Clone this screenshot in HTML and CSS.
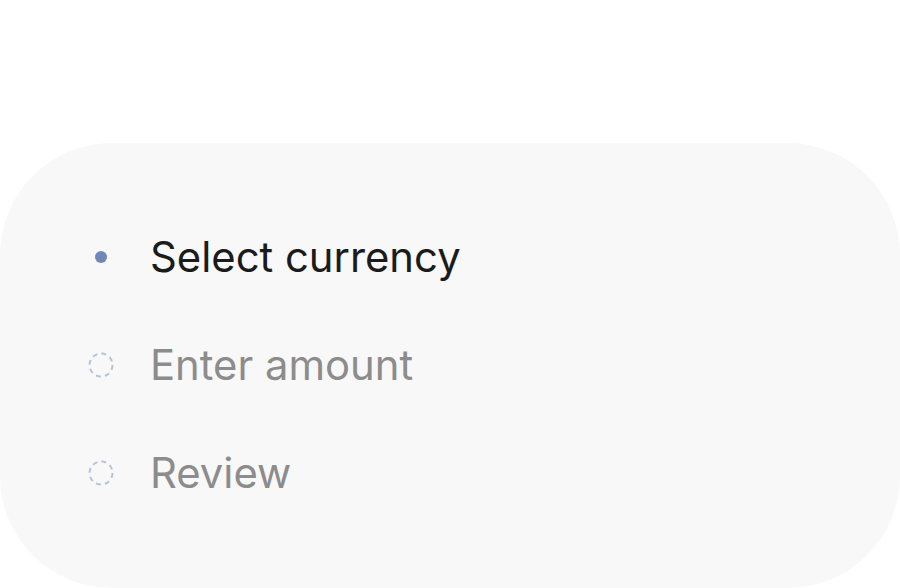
FILE: index.html
```html
<!DOCTYPE html>
<html lang="en">

<head>
    <meta charset="UTF-8">
    <title>Steps</title>
    <link rel="stylesheet" href="styles.css">
</head>

<body>
    <div class="card">
        <ol class="steps">
            <li class="step on">
                <span class="mark"><span class="dot"></span></span>
                <span class="label">Select currency</span>
            </li>
            <li class="step">
                <span class="mark">
                    <svg width="26" height="26" viewBox="0 0 26 26">
                        <circle cx="13" cy="13" r="11.5" fill="none" stroke="#b6c2d8" stroke-width="2" stroke-dasharray="5 4.03"/>
                    </svg>
                </span>
                <span class="label">Enter amount</span>
            </li>
            <li class="step">
                <span class="mark">
                    <svg width="26" height="26" viewBox="0 0 26 26">
                        <circle cx="13" cy="13" r="11.5" fill="none" stroke="#b6c2d8" stroke-width="2" stroke-dasharray="5 4.03"/>
                    </svg>
                </span>
                <span class="label">Review</span>
            </li>
        </ol>
    </div>
</body>

</html>
```

FILE: styles.css
```css
* {
    box-sizing: border-box;
}

body {
    margin: 0;
    background: #ffffff;
    font-family: Inter, "Noto Sans", sans-serif;
}

.card {
    margin-top: 143px;
    width: 900px;
    height: 445px;
    background: #f8f8f8;
    border-radius: 112px;
    padding: 60px 0 0 77px;
}

.steps {
    margin: 0;
    padding: 0;
    list-style: none;
}

.step {
    display: flex;
    align-items: center;
    gap: 25px;
    height: 108px;
}

.mark {
    width: 48px;
    display: flex;
    justify-content: center;
    align-items: center;
}

.dot {
    width: 12px;
    height: 12px;
    border-radius: 50%;
    background: #7088b5;
}

.label {
    font-size: 41.8px;
    line-height: 1;
    padding-top: 2px;
    color: #8c8c8c;
}

.step.on .label {
    color: #1b1b1b;
}
```
